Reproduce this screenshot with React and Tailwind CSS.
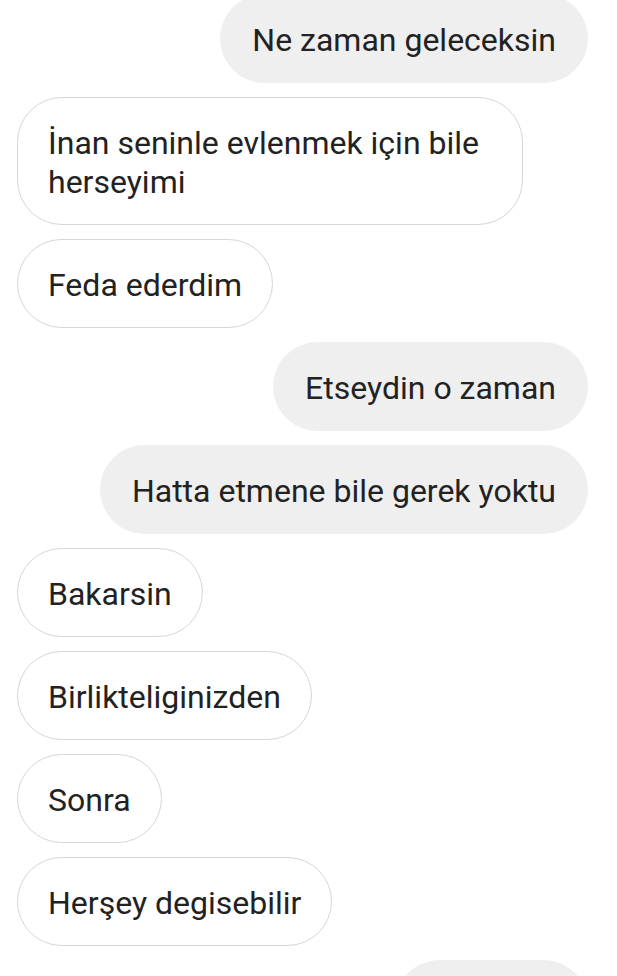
const messages = [
  { me: true, text: "Ne zaman geleceksin" },
  { me: false, text: "İnan seninle evlenmek için bile herseyimi", wrap: true },
  { me: false, text: "Feda ederdim" },
  { me: true, text: "Etseydin o zaman" },
  { me: true, text: "Hatta etmene bile gerek yoktu" },
  { me: false, text: "Bakarsin" },
  { me: false, text: "Birlikteliginizden" },
  { me: false, text: "Sonra" },
  { me: false, text: "Herşey degisebilir" },
];

const Bubble = ({ me, text, wrap }) => {
  if (me) {
    return (
      <div className="self-end rounded-[45px] bg-[#efefef] px-[32px] pt-[27px] pb-[23px] leading-[39px] whitespace-nowrap">
        {text}
      </div>
    );
  }
  return (
    <div
      className={
        "self-start rounded-[45px] border-[1.5px] border-[#d6d6d6] bg-white px-[30px] pt-[26px] pb-[22px] leading-[39px] " +
        (wrap ? "w-[506px]" : "whitespace-nowrap")
      }
    >
      {text}
    </div>
  );
};

export default function App() {
  return (
    <div
      className="h-[976px] overflow-hidden bg-white text-[32px] text-[#222222]"
      style={{ fontFamily: "Roboto, 'Noto Sans', sans-serif" }}
    >
      <div className="flex flex-col gap-[14px] pl-[17px] pr-[29px] -mt-[6px]">
        {messages.map((m, i) => (
          <Bubble key={i} {...m} />
        ))}
        <div className="self-end h-[89px] w-[193px] rounded-[45px] bg-[#efefef]" />
      </div>
    </div>
  );
}
